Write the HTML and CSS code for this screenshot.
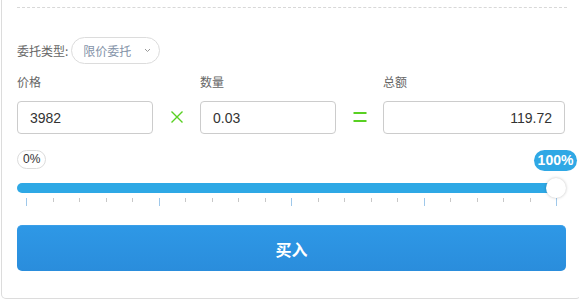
FILE: index.html
```html
<!DOCTYPE html>
<html lang="zh-CN">
<head>
<meta charset="utf-8">
<link rel="stylesheet" href="styles.css">
</head>
<body>
<div class="panel">
  <div class="divider"></div>
  <div class="type-row">
    <span class="type-label">委托类型:</span>
    <div class="select">
      <span class="select-text">限价委托</span>
      <svg class="chevron" width="7" height="5" viewBox="0 0 7 5"><path d="M1 1 L3.5 3.5 L6 1" fill="none" stroke="#999" stroke-width="1"/></svg>
    </div>
  </div>
  <div class="form-grid">
    <div class="label">价格</div>
    <div></div>
    <div class="label">数量</div>
    <div></div>
    <div class="label">总额</div>
    <div class="field">3982</div>
    <div class="op">
      <svg width="14" height="14" viewBox="0 0 14 14"><path d="M1.5 1.5 L12.5 12.5 M12.5 1.5 L1.5 12.5" stroke="#58d022" stroke-width="1.4" fill="none"/></svg>
    </div>
    <div class="field">0.03</div>
    <div class="op">
      <svg width="14" height="12" viewBox="0 0 14 12"><path d="M0.5 2 H13.5 M0.5 10 H13.5" stroke="#58d022" stroke-width="1.8" fill="none"/></svg>
    </div>
    <div class="field field-right">119.72</div>
  </div>
  <div class="slider">
    <div class="badge-row">
      <span class="badge-min">0%</span>
    </div>
    <span class="badge-max">100%</span>
    <div class="track"></div>
    <div class="handle"></div>
    <div class="ticks">
      <i class="big"></i><i></i><i></i><i></i><i></i>
      <i class="big"></i><i></i><i></i><i></i><i></i>
      <i class="big"></i><i></i><i></i><i></i><i></i>
      <i class="big"></i><i></i><i></i><i></i><i></i>
      <i class="big"></i>
    </div>
  </div>
  <button class="buy">买入</button>
</div>
</body>
</html>
```
FILE: styles.css
```css
html, body {
  margin: 0;
  padding: 0;
  background: #fff;
}
body {
  font-family: "Liberation Sans", "Noto Sans CJK SC", sans-serif;
  overflow: hidden;
}
.panel {
  box-sizing: border-box;
  margin-left: 1px;
  width: 580px;
  height: 299px;
  border: 1px solid #dcdcdc;
  border-top: none;
  border-radius: 0 0 5px 5px;
  padding: 7px 12px 0 15px;
}
.divider {
  border-top: 1px dashed #d8d8d8;
  margin-right: 1px;
}
.type-row {
  display: flex;
  align-items: center;
  margin-top: 29px;
  height: 27px;
}
.type-label {
  font-family: "Noto Sans CJK SC", sans-serif;
  font-size: 12px;
  color: #666;
  line-height: 16px;
}
.select {
  box-sizing: border-box;
  margin-left: 3px;
  width: 89px;
  height: 27px;
  border: 1px solid #dcdcdc;
  border-radius: 14px;
  display: flex;
  align-items: center;
  padding-left: 11px;
  padding-right: 8px;
}
.select-text {
  font-family: "Noto Sans CJK SC", sans-serif;
  font-size: 12px;
  color: #8493a8;
  flex: 1;
}
.chevron {
  display: block;
}
.form-grid {
  display: grid;
  grid-template-columns: 136px 47px 136px 47px 182px;
  grid-template-rows: 16px 33px;
  row-gap: 11px;
  margin-top: 10px;
}
.label {
  font-family: "Noto Sans CJK SC", sans-serif;
  font-size: 12px;
  line-height: 16px;
  color: #666;
}
.field {
  box-sizing: border-box;
  height: 33px;
  border: 1px solid #cccccc;
  border-radius: 4px;
  padding: 0 12px;
  font-size: 14px;
  color: #333;
  display: flex;
  align-items: center;
}
.field-right {
  justify-content: flex-end;
}
.op {
  display: flex;
  align-items: center;
  justify-content: center;
  padding-bottom: 1px;
}
.op svg {
  display: block;
}
.slider {
  position: relative;
  margin-top: 16px;
}
.badge-row {
  display: flex;
  height: 18px;
}
.badge-min {
  box-sizing: border-box;
  height: 19px;
  padding: 0 5px;
  border: 1px solid #dcdcdc;
  border-radius: 10px;
  font-size: 12px;
  line-height: 17px;
  color: #333;
}
.badge-max {
  position: absolute;
  left: 517px;
  top: 0;
  height: 21px;
  width: 43px;
  border-radius: 11px;
  background: #2fa8e5;
  color: #fff;
  font-size: 14px;
  font-weight: bold;
  line-height: 21px;
  text-align: center;
}
.track {
  margin-top: 15px;
  height: 10px;
  border-radius: 5px;
  background: #2ea8e5;
  margin-right: 6px;
}
.handle {
  position: absolute;
  left: 529px;
  top: 28px;
  width: 20px;
  height: 20px;
  border-radius: 50%;
  background: #fff;
  box-shadow: 0 0 3px rgba(0, 0, 0, 0.25);
}
.ticks {
  display: flex;
  justify-content: space-between;
  align-items: flex-start;
  width: 531px;
  margin-left: 9px;
  margin-top: 5px;
  height: 8px;
}
.ticks i {
  display: block;
  width: 1px;
  height: 4px;
  background: #c8c8c8;
}
.ticks i.big {
  height: 8px;
  background: #9fc8ea;
}
.buy {
  display: block;
  box-sizing: border-box;
  margin-top: 19px;
  width: 549px;
  height: 46px;
  border: none;
  border-top: 1px solid #3a9fe8;
  border-radius: 5px;
  background: linear-gradient(#2e98e6, #2a8ddc);
  color: #fff;
  font-family: "Noto Sans CJK SC", sans-serif;
  font-size: 16px;
  font-weight: bold;
  padding: 0;
}
```
